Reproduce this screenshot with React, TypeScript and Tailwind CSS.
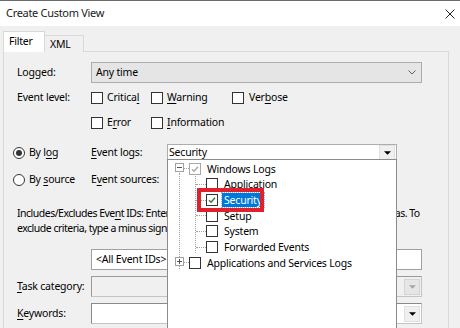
import React from "react";

const font = { fontFamily: '"Noto Sans", "Open Sans", sans-serif' };

function Check({ checked = false, dim = false }: { checked?: boolean; dim?: boolean }) {
  return (
    <span
      className={
        "relative inline-flex w-[12px] h-[12px] shrink-0 bg-white border " +
        (dim ? "border-[#a8a8a8]" : "border-[#333333]")
      }
    >
      {checked && (
        <svg viewBox="0 0 10 10" className="absolute inset-0 w-full h-full">
          <path
            d="M2 5.2 L4.1 7.3 L8 2.8"
            fill="none"
            stroke={dim ? "#a8a8a8" : "#2e7d32"}
            strokeWidth="1.4"
          />
        </svg>
      )}
    </span>
  );
}

function Radio({ on = false }: { on?: boolean }) {
  return (
    <span className="inline-flex items-center justify-center w-[12px] h-[12px] rounded-full border border-[#333333] bg-white shrink-0">
      {on && <span className="w-[6px] h-[6px] rounded-full bg-[#333333]" />}
    </span>
  );
}

function U({ children }: { children: React.ReactNode }) {
  return <span className="underline underline-offset-2">{children}</span>;
}

function DropBtn({ disabled = false }: { disabled?: boolean }) {
  return (
    <span
      className={
        "flex items-center justify-center w-[16px] h-[16px] border " +
        (disabled ? "border-[#d4d4d4] bg-[#e6e6e6]" : "border-[#e0e0e0] bg-[#f0f0f0]")
      }
    >
      <svg viewBox="0 0 8 4" className="w-[7px] h-[4px]">
        <path d="M0 0 L8 0 L4 4 Z" fill={disabled ? "#a5a5a5" : "#000"} />
      </svg>
    </span>
  );
}

function ExpandBox({ minus }: { minus?: boolean }) {
  return (
    <span className="relative inline-flex items-center justify-center w-[9px] h-[9px] border border-[#a0a0a0] bg-white shrink-0">
      <span className="absolute w-[5px] h-px bg-[#555]" />
      {!minus && <span className="absolute w-px h-[5px] bg-[#555]" />}
    </span>
  );
}

function TreeRow({
  label,
  level,
  expander,
  checked,
  dim,
  selected,
}: {
  label: string;
  level: 0 | 1;
  expander?: "minus" | "plus";
  checked?: boolean;
  dim?: boolean;
  selected?: boolean;
}) {
  return (
    <div className="flex items-center h-[15.67px]">
      {level === 0 ? (
        <>
          <span className="ml-[7px]">
            <ExpandBox minus={expander === "minus"} />
          </span>
          <span className="w-[5px] border-t border-dotted border-[#a0a0a0]" />
          <Check checked={checked} dim={dim} />
        </>
      ) : (
        <>
          <span className="ml-[28px] w-[10px] border-t border-dotted border-[#a0a0a0]" />
          <Check checked={checked} dim={dim} />
        </>
      )}
      <span
        className={
          "ml-[4px] px-[2px] leading-[14px] " +
          (selected ? "bg-[#0078d7] text-white outline outline-1 outline-dotted outline-[#8ab4e6]" : "text-black")
        }
      >
        {label}
      </span>
    </div>
  );
}

export default function App() {
  return (
    <div
      className="relative w-[460px] h-[328px] overflow-hidden bg-[#f0f0f0] text-[10.5px] tracking-[-0.2px] text-black border-t border-[#6b6b6b]"
      style={font}
    >
      {/* title bar */}
      <div className="h-[25px] bg-white flex items-center justify-between pl-[6px] pr-[4px]">
        <span className="text-[11px] tracking-[-0.3px] text-[#1a1a1a]">Create Custom View</span>
        <svg viewBox="0 0 10 10" className="w-[10px] h-[10px] mr-[1px]">
          <path d="M0.5 0.5 L9.5 9.5 M9.5 0.5 L0.5 9.5" stroke="#222" strokeWidth="1" />
        </svg>
      </div>

      <div className="pl-[3px] pt-[5px]">
        {/* tabs */}
        <div className="flex items-end h-[21px]">
          <div className="relative z-10 h-[21px] w-[42px] bg-white border border-b-0 border-[#d9d9d9] pl-[5px] pt-[2px]">
            Filter
          </div>
          <div className="h-[17px] w-[39px] bg-[#f0f0f0] border border-l-0 border-b-0 border-[#d9d9d9] pl-[5px] leading-[16px]">
            XML
          </div>
        </div>

        {/* panel */}
        <div className="w-[446px] h-[290px] -mt-px border border-[#d9d9d9] bg-[#f0f0f0] pl-[12px] pt-[10px]">
          <div className="flex items-center h-[21px]">
            <span className="w-[75px] pl-[1px]">Logged:</span>
            <div className="w-[331px] h-[21px] bg-[#e5e5e5] border border-[#adadad] flex items-center justify-between pl-[4px] pr-[5px]">
              <span>Any time</span>
              <svg viewBox="0 0 8 5" className="w-[8px] h-[5px]">
                <path d="M0.5 0.5 L4 4 L7.5 0.5" fill="none" stroke="#606060" strokeWidth="1" />
              </svg>
            </div>
          </div>

          <div className="flex items-center h-[14px] mt-[8px]">
            <span className="w-[75px] pl-[1px]">Event level:</span>
            <div className="flex items-center w-[60px] gap-[4px]">
              <Check />
              <span>
                Critica<U>l</U>
              </span>
            </div>
            <div className="flex items-center w-[81px] gap-[4px]">
              <Check />
              <span>
                <U>W</U>arning
              </span>
            </div>
            <div className="flex items-center gap-[5px]">
              <Check />
              <span>
                Ver<U>b</U>ose
              </span>
            </div>
          </div>

          <div className="flex items-center h-[14px] mt-[11px]">
            <span className="w-[75px]" />
            <div className="flex items-center w-[60px] gap-[4px]">
              <Check />
              <span>
                E<U>r</U>ror
              </span>
            </div>
            <div className="flex items-center gap-[4px]">
              <Check />
              <span>
                <U>I</U>nformation
              </span>
            </div>
          </div>

          <div className="flex items-center h-[18px] mt-[14px]">
            <div className="flex items-center w-[75px] gap-[4px] -ml-[3px]">
              <Radio on />
              <span>
                By l<U>o</U>g
              </span>
            </div>
            <span className="w-[76px] ml-[3px]">
              <U>E</U>vent logs:
            </span>
            <div className="w-[230px] h-[18px] bg-white border border-[#adadad] flex items-center justify-between pl-[1px] pr-px">
              <span>Security</span>
              <DropBtn />
            </div>
          </div>

          <div className="flex items-center h-[18px] mt-[9px]">
            <div className="flex items-center w-[75px] gap-[4px] -ml-[3px]">
              <Radio />
              <span>
                By <U>s</U>ource
              </span>
            </div>
            <span className="ml-[3px]">
              E<U>v</U>ent sources:
            </span>
          </div>

          <div className="mt-[17px] leading-[15px] whitespace-nowrap pl-[1px] tracking-[-0.5px]">
            <div>Includes/Excludes Eve<U>n</U>t IDs: Enter ID numbers and/or ID ranges separated by commas. To</div>
            <div>exclude criteria, type a minus sign first. For example 1,3,5-99,-76</div>
          </div>

          <div className="flex items-center h-[21px] mt-[13px]">
            <span className="w-[75px]" />
            <div className="w-[331px] h-[21px] bg-white border border-[#a0a0a0] flex items-center pl-[4px]">
              &lt;All Event IDs&gt;
            </div>
          </div>

          <div className="flex items-center h-[21px] mt-[6px]">
            <span className="w-[75px] pl-[1px]">
              <U>T</U>ask category:
            </span>
            <div className="w-[331px] h-[21px] bg-[#f0f0f0] border border-[#c4c4c4] border-t-[#9a9a9a] border-l-[#9a9a9a] flex items-center justify-end pr-[1px]">
              <DropBtn disabled />
            </div>
          </div>

          <div className="flex items-center h-[21px] mt-[6px]">
            <span className="w-[75px] pl-[1px]">
              <U>K</U>eywords:
            </span>
            <div className="w-[331px] h-[21px] bg-white border border-[#c4c4c4] border-t-[#8a8a8a] border-l-[#8a8a8a] flex items-center justify-end pr-[1px]">
              <DropBtn />
            </div>
          </div>
        </div>
      </div>

      {/* dropdown popup over the form */}
      <div className="absolute left-[167px] top-[158px] w-[230px] h-[180px] bg-white border border-[#8c8c8c] pt-[1px]">
        <div className="relative">
          {/* tree guide lines */}
          <span className="absolute left-[11px] top-[12px] h-[96px] border-l border-dotted border-[#a0a0a0]" />
          <span className="absolute left-[27px] top-[13px] h-[79px] border-l border-dotted border-[#a0a0a0]" />
          <TreeRow label="Windows Logs" level={0} expander="minus" checked dim />
          <TreeRow label="Application" level={1} />
          <TreeRow label="Security" level={1} checked selected />
          <TreeRow label="Setup" level={1} />
          <TreeRow label="System" level={1} />
          <TreeRow label="Forwarded Events" level={1} />
          <TreeRow label="Applications and Services Logs" level={0} expander="plus" />
        </div>
      </div>

      {/* red annotation box */}
      <div className="absolute left-[197px] top-[187px] w-[67px] h-[24px] border-[4px] border-[#e0202a]" />
    </div>
  );
}
